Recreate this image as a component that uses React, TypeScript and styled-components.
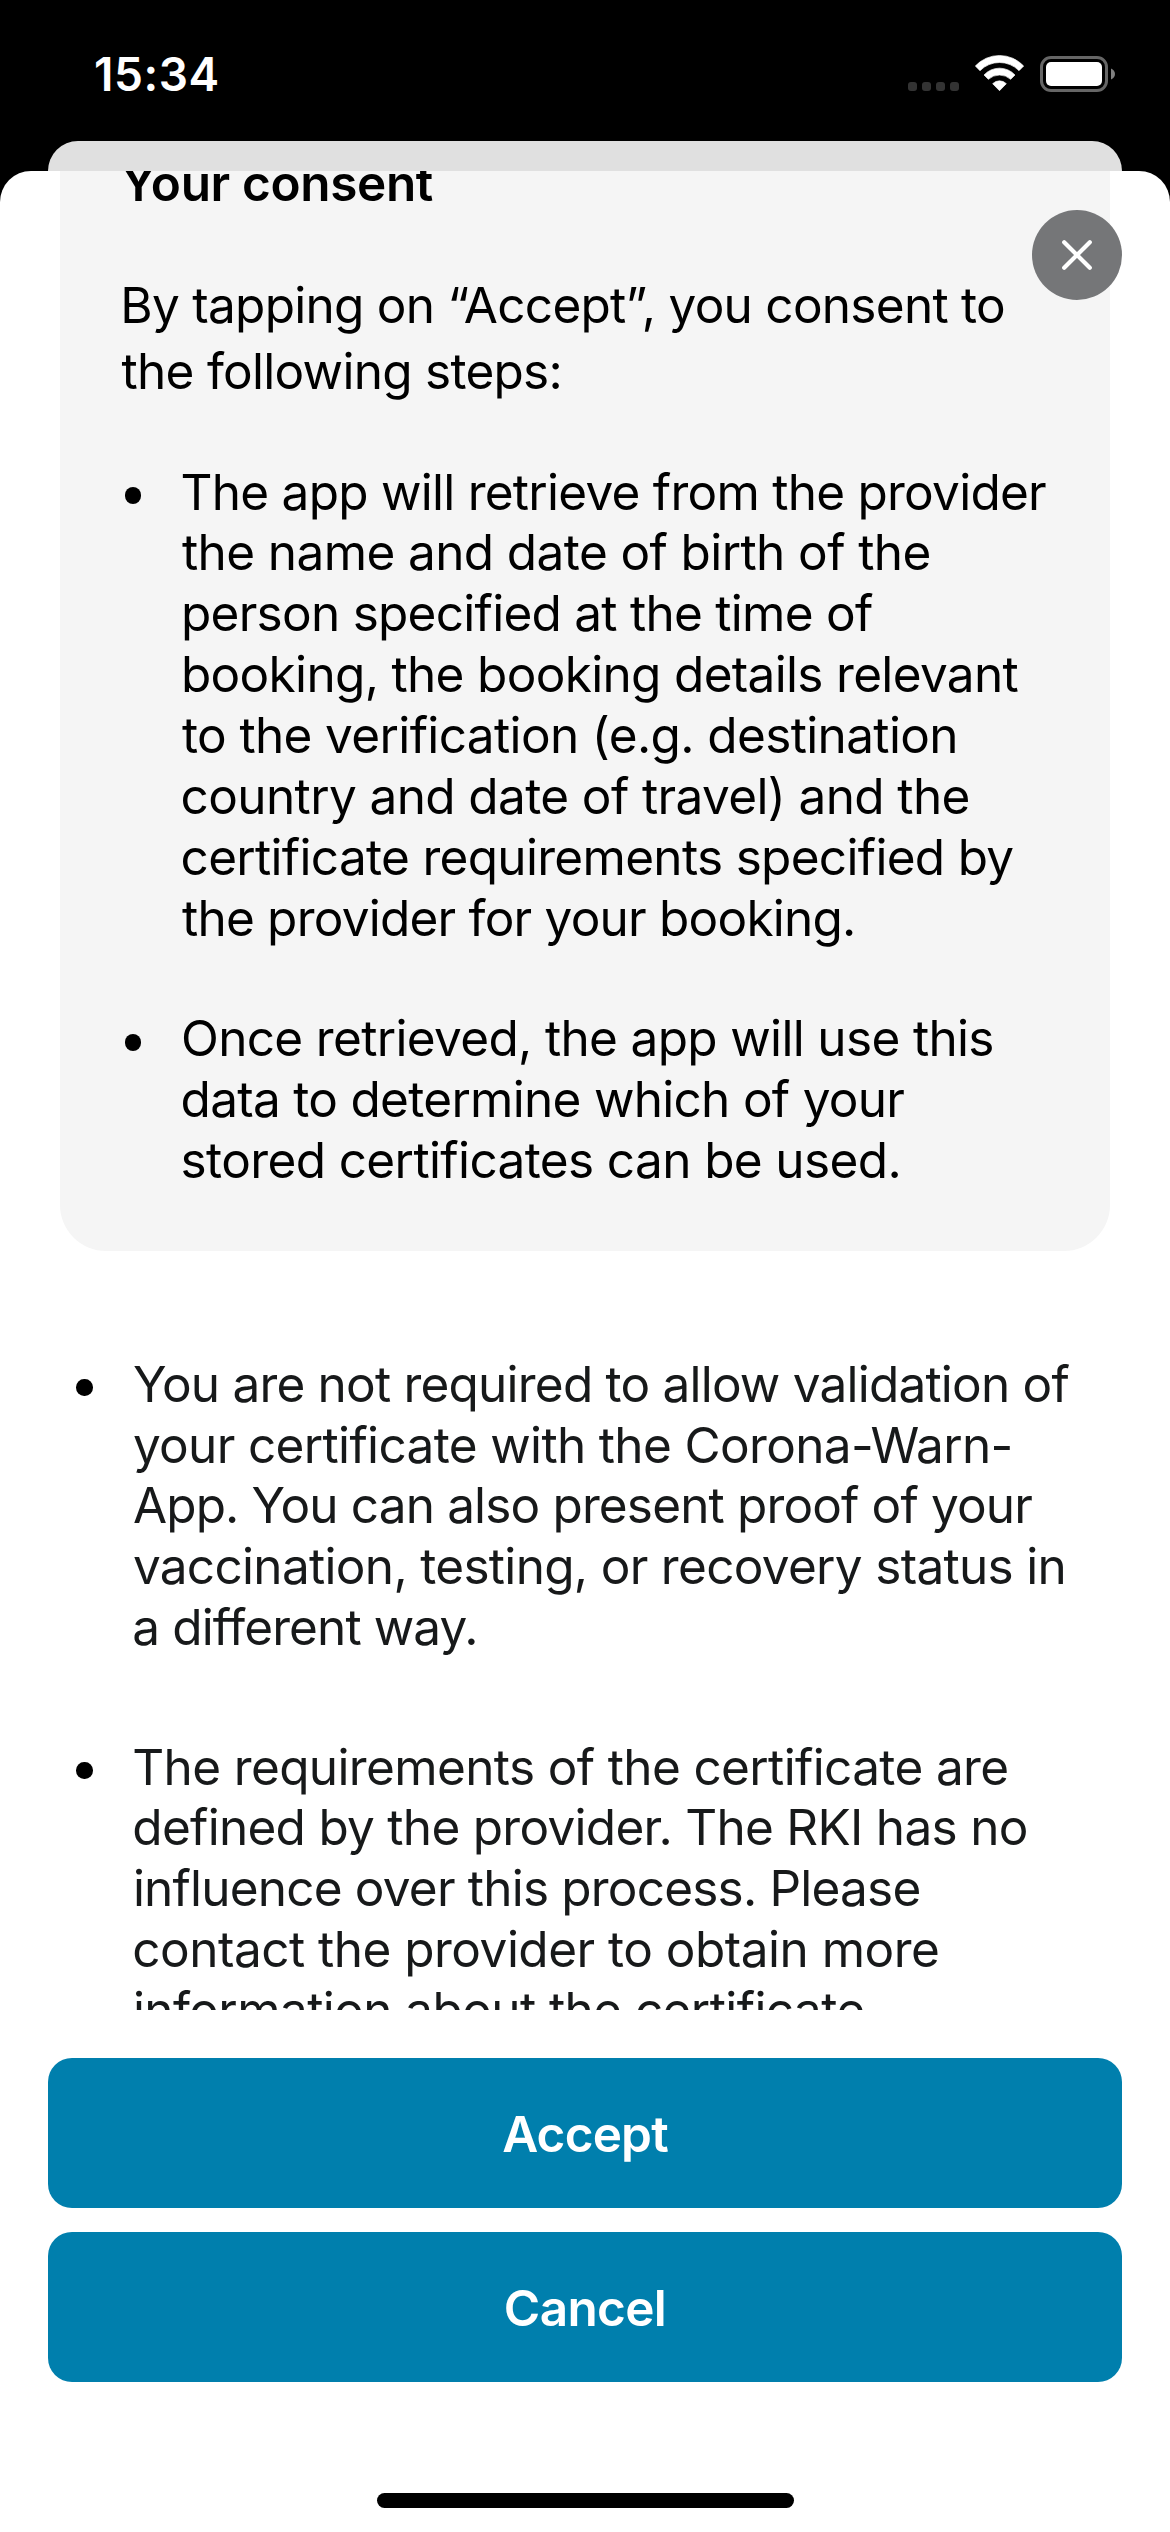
import React from "react";
import styled, { createGlobalStyle } from "styled-components";

const GlobalStyle = createGlobalStyle`
  html, body { margin: 0; padding: 0; background: #000; }
  *, *::before, *::after { box-sizing: border-box; }
`;

const Screen = styled.div`
  width: 1170px;
  height: 2532px;
  display: flex;
  flex-direction: column;
  overflow: hidden;
  background: #000;
  font-family: Inter, "Liberation Sans", sans-serif;
  font-size: 49.5px;
`;

const StatusBar = styled.header`
  flex: none;
  height: 141px;
  display: flex;
  justify-content: space-between;
  align-items: flex-start;
  padding: 46px 55px 0 94px;
  color: #fff;
`;

const Clock = styled.time`
  font-size: 46px;
  font-weight: 600;
  line-height: 56px;
  letter-spacing: 0.55px;
`;

const StatusIcons = styled.div`
  display: flex;
  align-items: flex-start;
  padding-top: 9px;
`;

const SignalDots = styled.div`
  display: flex;
  gap: 5px;
  margin: 27px 16px 0 0;
`;

const SignalDot = styled.i`
  width: 9px;
  height: 9px;
  border-radius: 3px;
  background: #333;
`;

const WifiIcon = styled.svg`
  width: 49px;
  height: 37px;
  margin-right: 16px;
`;

const BatteryIcon = styled.svg`
  width: 75px;
  height: 36px;
  margin-top: 1px;
`;

const UnderlyingSheet = styled.div`
  flex: none;
  height: 30px;
  margin: 0 48px;
  border-radius: 30px 30px 0 0;
  background: #e0e0e0;
`;

const Sheet = styled.main`
  position: relative;
  flex: 1;
  min-height: 0;
  display: flex;
  flex-direction: column;
  overflow: hidden;
  border-radius: 31px 31px 0 0;
  background: #fff;
`;

const CloseButton = styled.button`
  position: absolute;
  top: 39px;
  right: 48px;
  width: 90px;
  height: 90px;
  display: grid;
  place-items: center;
  padding: 0;
  border: 0;
  border-radius: 50%;
  background: #757678;
`;

const ScrollArea = styled.div`
  flex: none;
  height: 1839px;
  overflow: hidden;
`;

const ConsentCard = styled.section`
  margin: -78px 60px 0;
  padding: 60px 0 60px 60px;
  border-radius: 46px;
  background: #f5f5f5;
  color: #000;
`;

const CardTitle = styled.h2`
  margin: 0 0 58px;
  padding-left: 0.8px;
  font-size: 49.5px;
  font-weight: 600;
  line-height: 61px;
  letter-spacing: -0.36px;
`;

const Intro = styled.p`
  margin: 0 0 57.6px;
  line-height: 66px;
`;

const List = styled.ul<{ $gap: number }>`
  display: flex;
  flex-direction: column;
  gap: ${(p) => p.$gap}px;
  margin: 0;
  padding: 0;
  list-style: none;
  line-height: 60.86px;
`;

const CardList = styled(List)`
  padding-left: 4.7px;
`;

const NotesList = styled(List)`
  padding: 102.6px 0 0 76.4px;
  color: #17191a;
`;

const Item = styled.li`
  display: flex;
  align-items: flex-start;
  gap: 39.6px;
`;

const Bullet = styled.i`
  flex: none;
  width: 16.3px;
  height: 16.3px;
  margin-top: 25.8px;
  border-radius: 50%;
  background: #000;
`;

const Line = styled.span<{ $tracking: number; $indent: number }>`
  display: block;
  white-space: pre;
  letter-spacing: ${(p) => p.$tracking}px;
  margin-left: ${(p) => p.$indent}px;
`;

const Actions = styled.footer`
  display: flex;
  flex-direction: column;
  gap: 24px;
  padding: 48px 48px 0;
`;

const ActionButton = styled.button<{ $tracking: number }>`
  height: 150px;
  padding: 2px 0 0;
  border: 0;
  border-radius: 24px;
  background: #007fad;
  color: #fff;
  font: inherit;
  font-weight: 600;
  letter-spacing: ${(p) => p.$tracking}px;
`;

const HomeIndicator = styled.div`
  width: 417px;
  height: 15px;
  margin: 111px auto 0;
  border-radius: 8px;
  background: #000;
`;

type TextLine = [text: string, tracking: number, indent?: number];

const introLines: TextLine[] = [
  ["By tapping on “Accept”, you consent to", -0.722, 0.3],
  ["the following steps:", -0.727, 1.6],
];

const cardItems: TextLine[][] = [
  [
    ["The app will retrieve from the provider", -0.741],
    ["the name and date of birth of the", -0.6, 1.4],
    ["person specified at the time of", -0.73, 0.4],
    ["booking, the booking details relevant", -0.675, 0.4],
    ["to the verification (e.g. destination", -0.633, 1.4],
    ["country and date of travel) and the", -0.615],
    ["certificate requirements specified by", -0.687],
    ["the provider for your booking.", -0.773, 1.4],
  ],
  [
    ["Once retrieved, the app will use this", -0.659, 0.4],
    ["data to determine which of your", -0.709],
    ["stored certificates can be used.", -0.617],
  ],
];

const noteItems: TextLine[][] = [
  [
    ["You are not required to allow validation of", -0.79, 0.6],
    ["your certificate with the Corona-Warn-", -0.654, 0.6],
    ["App. You can also present proof of your", -0.85, 0.6],
    ["vaccination, testing, or recovery status in", -0.687, 0.6],
    ["a different way.", -0.893],
  ],
  [
    ["The requirements of the certificate are", -0.632],
    ["defined by the provider. The RKI has no", -0.71],
    ["influence over this process. Please", -0.8, 0.6],
    ["contact the provider to obtain more", -0.508],
    ["information about the certificate", -0.581, 0.6],
  ],
];

const Lines = ({ lines }: { lines: TextLine[] }) => (
  <>
    {lines.map(([text, tracking, indent = 0]) => (
      <Line key={text} $tracking={tracking} $indent={indent}>
        {text}
      </Line>
    ))}
  </>
);

const BulletItem = ({ lines }: { lines: TextLine[] }) => (
  <Item>
    <Bullet />
    <div>
      <Lines lines={lines} />
    </div>
  </Item>
);

export default function App() {
  return (
    <>
      <GlobalStyle />
      <Screen>
        <StatusBar>
          <Clock>15:34</Clock>
          <StatusIcons>
            <SignalDots>
              <SignalDot />
              <SignalDot />
              <SignalDot />
              <SignalDot />
            </SignalDots>
            <WifiIcon viewBox="0 0 147 111" fill="#fff" stroke="#fff" strokeWidth="2" strokeLinejoin="round">
              <path d="M1 33A99 99 0 0 1 146 33L132 47A82 82 0 0 0 15 47Z" />
              <path d="M27 60A63 63 0 0 1 120 60L107 73A50 50 0 0 0 40 73Z" />
              <path d="M53 86A29 29 0 0 1 94 86L73.500 107Z" />
            </WifiIcon>
            <BatteryIcon viewBox="0 0 75 36">
              <rect x="1.500" y="1.500" width="65" height="33" rx="9.500" fill="none" stroke="#666" strokeWidth="3" />
              <rect x="6" y="6" width="56" height="24" rx="5" fill="#fff" />
              <path d="M71 12.500C73.500 13.500 75 15.500 75 18S73.500 22.500 71 23.500Z" fill="#808080" />
            </BatteryIcon>
          </StatusIcons>
        </StatusBar>
        <UnderlyingSheet />
        <Sheet>
          <ScrollArea>
            <ConsentCard>
              <CardTitle>Your consent</CardTitle>
              <Intro>
                <Lines lines={introLines} />
              </Intro>
              <CardList $gap={60}>
                {cardItems.map((lines) => (
                  <BulletItem key={lines[0][0]} lines={lines} />
                ))}
              </CardList>
            </ConsentCard>
            <NotesList $gap={78.7}>
              {noteItems.map((lines) => (
                <BulletItem key={lines[0][0]} lines={lines} />
              ))}
            </NotesList>
          </ScrollArea>
          <Actions>
            <ActionButton $tracking={-0.82}>Accept</ActionButton>
            <ActionButton $tracking={-0.66}>Cancel</ActionButton>
          </Actions>
          <HomeIndicator />
          <CloseButton aria-label="Close">
            <svg width="34" height="34" viewBox="0 0 34 34" stroke="#fff" strokeWidth="4.200" strokeLinecap="round">
              <path d="M4.200 4.200L29.800 29.800M29.800 4.200L4.200 29.800" />
            </svg>
          </CloseButton>
        </Sheet>
      </Screen>
    </>
  );
}
